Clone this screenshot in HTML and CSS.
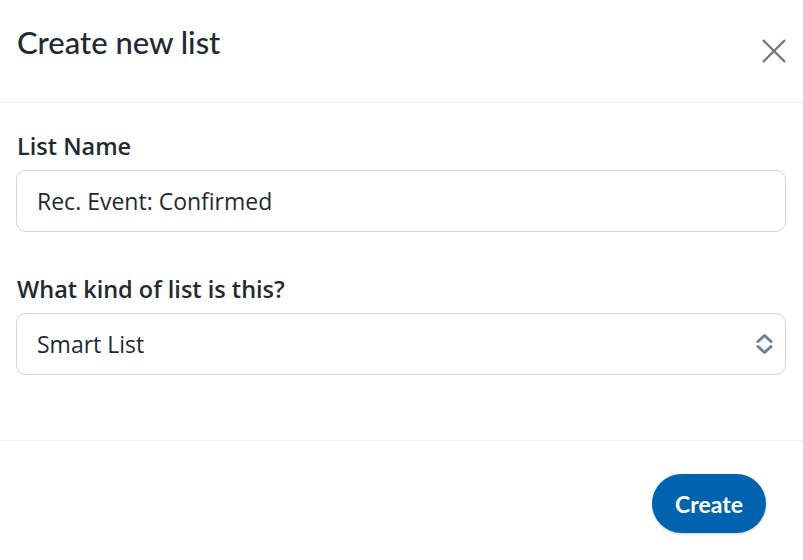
FILE: index.html
```html
<!DOCTYPE html>
<html lang="en">
<head>
<meta charset="utf-8">
<title>Create new list</title>
<link rel="stylesheet" href="styles.css">
</head>
<body>
<div class="modal">
  <header class="modal-header">
    <h1 class="modal-title">Create new list</h1>
    <button class="close-btn" aria-label="Close">
      <svg width="26" height="26" viewBox="0 0 26 26"><path d="M2 2 L24 24 M24 2 L2 24" stroke="#777" stroke-width="2.4" fill="none"/></svg>
    </button>
  </header>
  <div class="modal-body">
    <label class="field-label">List Name</label>
    <div class="text-input">Rec. Event: Confirmed</div>
    <label class="field-label second">What kind of list is this?</label>
    <div class="select-input">
      <span>Smart List</span>
      <svg class="chev" width="17" height="22" viewBox="0 0 17 22"><path d="M2 8.5 L8.5 2.5 L15 8.5 M2 13.5 L8.5 19.5 L15 13.5" stroke="#6c819a" stroke-width="3" fill="none" stroke-linecap="round" stroke-linejoin="round"/></svg>
    </div>
  </div>
  <footer class="modal-footer">
    <button class="create-btn">Create</button>
  </footer>
</div>
</body>
</html>
```

FILE: styles.css
```css
* { box-sizing: border-box; }
html, body { margin: 0; padding: 0; background: #fff; }
body { font-family: "Open Sans", "Noto Sans", sans-serif; color: #1f2a33; }
.modal { width: 803px; height: 560px; }
.modal-header {
  height: 103px;
  border-bottom: 1px solid #efefef;
  display: flex;
  align-items: flex-start;
  justify-content: space-between;
  padding: 22px 16px 0 17px;
}
.modal-title {
  margin: 0;
  font-family: "Lato", "Noto Sans", sans-serif;
  font-weight: 500;
  font-size: 31px;
  line-height: 40px;
  color: #1f2a33;
}
.close-btn {
  background: none; border: none; padding: 0; margin-top: 16px; margin-right: 0;
  width: 26px; height: 26px; display: flex;
}
.modal-body { padding: 27px 17px 0 16px; height: 338px; border-bottom: 1px solid #f0f0f0; }
.field-label {
  display: block;
  font-weight: 600;
  font-size: 23.5px;
  line-height: 32px;
  padding-left: 1px;
  margin-bottom: 8px;
}
.field-label.second { margin-top: 41px; }
.text-input, .select-input {
  height: 62px;
  border: 1px solid #cfd4da;
  border-radius: 10px;
  padding: 0 20px;
  display: flex;
  align-items: center;
  font-size: 23px;
  color: #1f2a33;
}
.select-input { justify-content: space-between; padding-right: 12px; }
.modal-footer { display: flex; justify-content: flex-end; padding: 33px 37px 0 0; }
.create-btn {
  width: 114px; height: 59px;
  border: none;
  border-radius: 30px;
  background: #0063b0;
  color: #fff;
  font-family: "Lato", "Noto Sans", sans-serif;
  font-weight: 700;
  font-size: 23px;
  box-shadow: 0 1px 3px rgba(0,0,0,0.2);
}
```
